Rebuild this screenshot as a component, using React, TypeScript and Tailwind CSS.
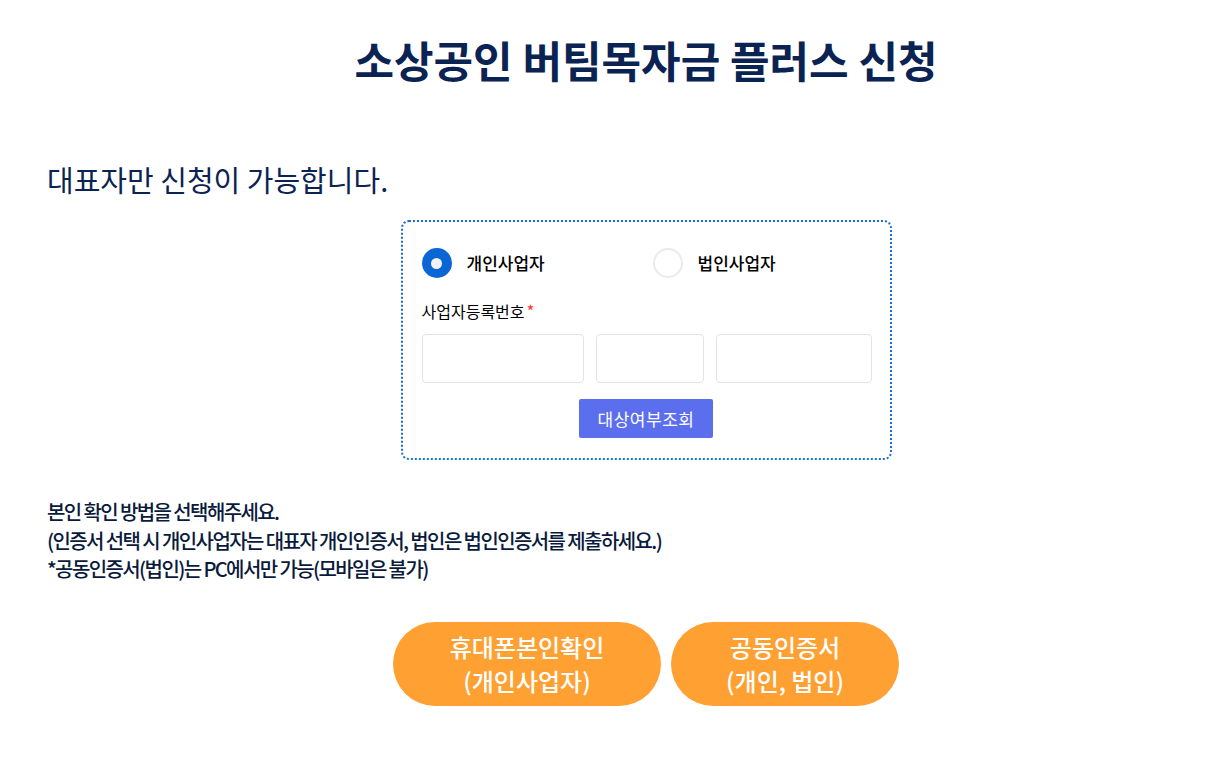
import React, { useState } from "react";

const font = { fontFamily: '"Noto Sans CJK KR", "Noto Sans", sans-serif' };

const Radio = ({
  checked,
  label,
  onClick,
}: {
  checked: boolean;
  label: string;
  onClick: () => void;
}) => (
  <button type="button" onClick={onClick} className="flex items-center gap-[15px]">
    {checked ? (
      <span className="flex h-[30px] w-[30px] items-center justify-center rounded-full bg-[#0a66d4]">
        <span className="h-[11px] w-[11px] rounded-full bg-[#f2f2f2]" />
      </span>
    ) : (
      <span className="h-[30px] w-[30px] rounded-full border-2 border-[#ebebeb] bg-white" />
    )}
    <span className="text-[17px] font-medium text-black">{label}</span>
  </button>
);

const App = () => {
  const [type, setType] = useState<"personal" | "corp">("personal");

  return (
    <div className="min-h-[759px] w-full bg-white text-[#0a2352]" style={font}>
      <div className="pl-[74px] pt-[31px] text-center">
        <h1 className="text-[43px] font-bold leading-[56px]">
          소상공인 버팀목자금 플러스 신청
        </h1>
      </div>

      <p className="mt-[72px] pl-[47px] text-[29px] leading-[40px]">
        대표자만 신청이 가능합니다.
      </p>

      <div className="mt-[21px] flex justify-center pl-[74px]">
        <div className="w-[491px] rounded-[8px] border-2 border-dotted border-[#1a6fd0] px-[19px] pb-[20px] pt-[26px]">
          <div className="flex">
            <div className="w-[231px]">
              <Radio
                checked={type === "personal"}
                label="개인사업자"
                onClick={() => setType("personal")}
              />
            </div>
            <Radio
              checked={type === "corp"}
              label="법인사업자"
              onClick={() => setType("corp")}
            />
          </div>

          <div className="mt-[21px] text-[16px] leading-[24px] text-black">
            사업자등록번호<span className="ml-[2px] text-[17px] text-[#ff3b30]">*</span>
          </div>

          <div className="mt-[11px] flex gap-[12px]">
            <input className="h-[49px] w-[162px] rounded-[4px] border border-[#e3e3e3] outline-none" />
            <input className="h-[49px] w-[108px] rounded-[4px] border border-[#e3e3e3] outline-none" />
            <input className="h-[49px] w-[156px] rounded-[4px] border border-[#e3e3e3] outline-none" />
          </div>

          <div className="mt-[16px] flex justify-center">
            <button
              type="button"
              className="h-[39px] w-[134px] rounded-[2px] bg-[#5b6eee] text-[17px] tracking-[0.5px] text-white"
            >
              대상여부조회
            </button>
          </div>
        </div>
      </div>

      <div className="mt-[38px] pl-[47px] text-[20px] font-medium leading-[28.5px] tracking-[-1.6px] text-[#0a1a3c]">
        <p>본인 확인 방법을 선택해주세요.</p>
        <p>(인증서 선택 시 개인사업자는 대표자 개인인증서, 법인은 법인인증서를 제출하세요.)</p>
        <p>*공동인증서(법인)는 PC에서만 가능(모바일은 불가)</p>
      </div>

      <div className="mt-[38px] flex justify-center gap-[10px] pl-[74px]">
        <button
          type="button"
          className="h-[84px] w-[268px] rounded-full bg-[#ffa033] text-[24px] font-medium leading-[34px] text-white"
        >
          휴대폰본인확인
          <br />
          (개인사업자)
        </button>
        <button
          type="button"
          className="h-[84px] w-[228px] rounded-full bg-[#ffa033] text-[24px] font-medium leading-[34px] text-white"
        >
          공동인증서
          <br />
          (개인, 법인)
        </button>
      </div>
    </div>
  );
};

export default App;
